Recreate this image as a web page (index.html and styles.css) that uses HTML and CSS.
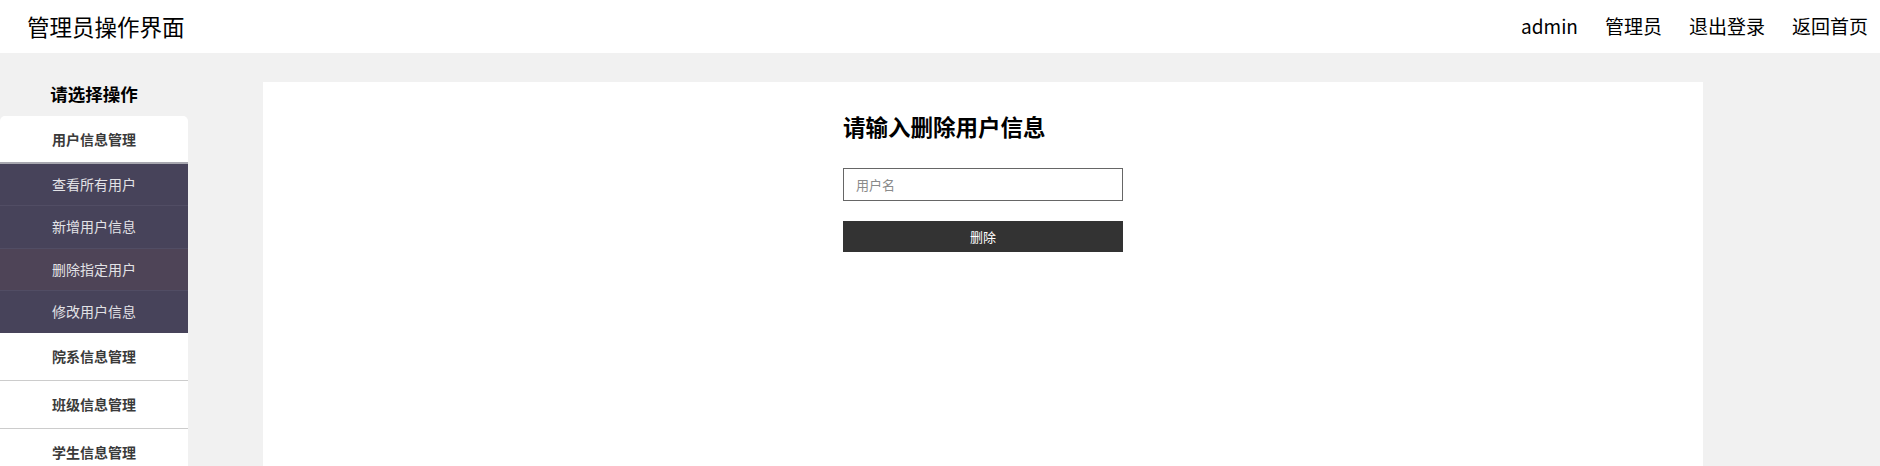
FILE: index.html
```html
<!DOCTYPE html>
<html lang="zh-CN">
<head>
<meta charset="utf-8">
<title>管理员操作界面</title>
<link rel="stylesheet" href="styles.css">
</head>
<body>
<header class="topbar">
  <div class="brand">管理员操作界面</div>
  <nav class="topnav">
    <a class="topnav-link">admin</a>
    <a class="topnav-link">管理员</a>
    <a class="topnav-link">退出登录</a>
    <a class="topnav-link">返回首页</a>
  </nav>
</header>
<div class="layout">
  <aside class="sidebar">
    <div class="sidebar-title">请选择操作</div>
    <ul class="menu">
      <li class="menu-group first">用户信息管理</li>
      <li class="submenu">
        <div class="sub-item">查看所有用户</div>
        <div class="sub-item">新增用户信息</div>
        <div class="sub-item active">删除指定用户</div>
        <div class="sub-item">修改用户信息</div>
      </li>
      <li class="menu-group">院系信息管理</li>
      <li class="menu-group">班级信息管理</li>
      <li class="menu-group">学生信息管理</li>
    </ul>
  </aside>
  <main class="panel">
    <form class="form">
      <h2 class="form-title">请输入删除用户信息</h2>
      <input class="form-input" type="text" placeholder="用户名">
      <button class="form-button" type="button">删除</button>
    </form>
  </main>
</div>
</body>
</html>
```
FILE: styles.css
```css
* { box-sizing: border-box; }
html, body {
  margin: 0;
  padding: 0;
  background: #f1f1f1;
  font-family: "Noto Sans CJK SC", "Noto Sans", sans-serif;
  color: #000;
  overflow: hidden;
}
.topbar {
  height: 53px;
  background: #fff;
  display: flex;
  align-items: center;
  justify-content: space-between;
  padding: 0 12px 0 27px;
}
.brand {
  font-size: 22.5px;
  line-height: 30px;
  padding-bottom: 2px;
}
.topnav {
  display: flex;
  gap: 27px;
  padding-bottom: 2px;
}
.topnav-link {
  font-size: 19px;
  line-height: 26px;
  color: #000;
}
.layout {
  display: flex;
  align-items: flex-start;
}
.sidebar {
  width: 188px;
  flex: none;
}
.sidebar-title {
  height: 63px;
  padding-top: 28px;
  font-size: 17.5px;
  line-height: 26px;
  font-weight: bold;
  text-align: center;
}
.menu {
  list-style: none;
  margin: 0;
  padding: 0;
}
.menu-group {
  height: 48px;
  line-height: 47px;
  background: #fff;
  border-bottom: 1px solid #cccccc;
  text-align: center;
  font-size: 14px;
  font-weight: bold;
  color: #3a3a3a;
}
.menu-group.first {
  line-height: 46px;
  border-top-right-radius: 5px;
  border-top-left-radius: 5px;
  border-bottom: 2px solid #a8a8b0;
}
.submenu {
  background: #47435a;
}
.sub-item {
  height: 42.25px;
  line-height: 41px;
  text-align: center;
  font-size: 14px;
  color: #e2e2e6;
  border-bottom: 1px solid #514d64;
}
.sub-item:last-child {
  border-bottom: none;
}
.sub-item.active {
  background: #4e4457;
}
.panel {
  margin-left: 75px;
  margin-top: 29px;
  width: 1440px;
  height: 500px;
  background: #fff;
  display: flex;
  justify-content: center;
}
.form {
  width: 280px;
  padding-top: 29px;
  display: flex;
  flex-direction: column;
}
.form-title {
  margin: 0 0 27px;
  font-size: 22.5px;
  line-height: 30px;
  font-weight: bold;
}
.form-input {
  width: 280px;
  height: 33px;
  border: 1px solid #666;
  padding: 0 12px;
  font-family: inherit;
  font-size: 13px;
  outline: none;
}
.form-input::placeholder {
  color: #8a8a8a;
}
.form-button {
  margin-top: 20px;
  width: 280px;
  height: 31px;
  border: none;
  background: #333;
  color: #fff;
  font-family: inherit;
  font-size: 13px;
}
```
